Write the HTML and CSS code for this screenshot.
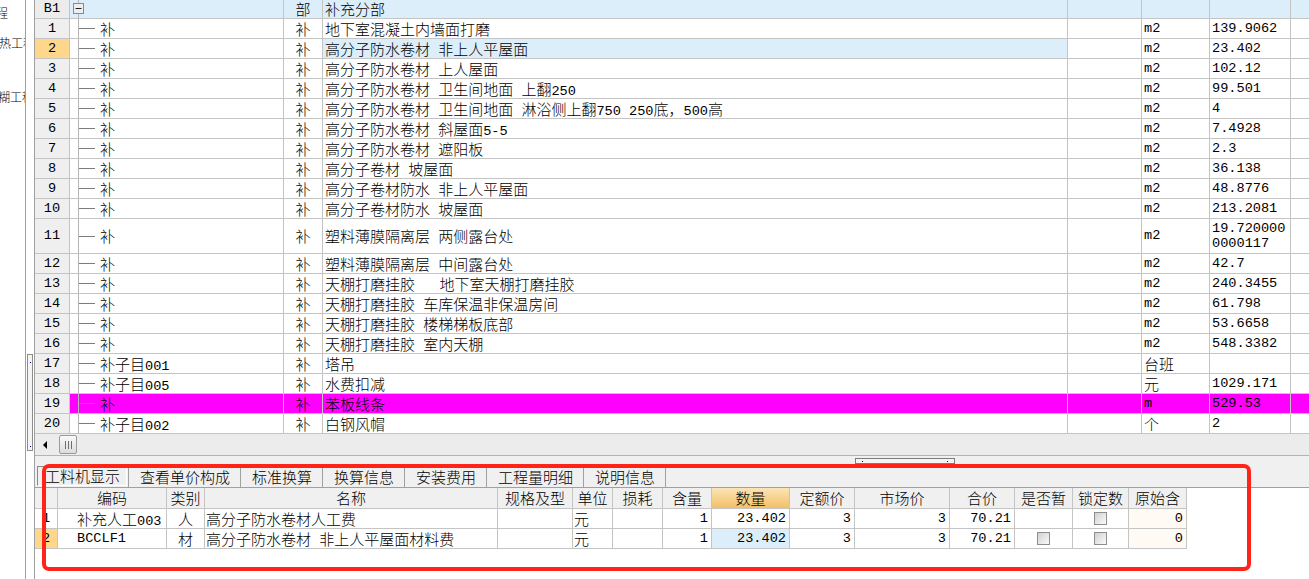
FILE: index.html
```html
<!DOCTYPE html>
<html lang="zh-CN">
<head>
<meta charset="utf-8">
<title>工程量清单</title>
<link rel="stylesheet" href="styles.css">
</head>
<body>
<div class="app">
  <aside class="nav">
    <div class="nav-item i1">工程</div>
    <div class="nav-item i2">保温隔热工程</div>
    <div class="nav-item i3">裱糊工程</div>
  </aside>
  <div class="gutter">
    <div class="vgrip"><svg width="4" height="95" viewBox="0 0 4 95"><rect x="2" y="7" width="1" height="1" fill="#000080"/><rect x="2" y="91" width="1" height="1" fill="#000080"/></svg></div>
  </div>
  <main class="main">
    <div class="grid">
      <div class="row head">
        <div class="c rn">B1</div>
        <div class="c tree"><svg class="minus" width="11" height="11" viewBox="0 0 11 11"><rect x="0.5" y="0.5" width="10" height="10" fill="#eeeeee" stroke="#8a8a8a"/><path d="M2.5 5.5h6" stroke="#202020"/></svg></div>
        <div class="c bu">部</div>
        <div class="c nm">补充分部</div>
        <div class="c"></div><div class="c"></div><div class="c"></div><div class="c last"></div>
      </div>
      <div class="row"><div class="c rn">1</div><div class="c tree">补</div><div class="c bu">补</div><div class="c nm">地下室混凝土内墙面打磨</div><div class="c"></div><div class="c n">m2</div><div class="c n">139.9062</div><div class="c last"></div></div>
      <div class="row cur"><div class="c rn">2</div><div class="c tree">补</div><div class="c bu">补</div><div class="c nm">高分子防水卷材<span class="l"> </span>非上人平屋面</div><div class="c"></div><div class="c n">m2</div><div class="c n">23.402</div><div class="c last"></div></div>
      <div class="row"><div class="c rn">3</div><div class="c tree">补</div><div class="c bu">补</div><div class="c nm">高分子防水卷材<span class="l"> </span>上人屋面</div><div class="c"></div><div class="c n">m2</div><div class="c n">102.12</div><div class="c last"></div></div>
      <div class="row"><div class="c rn">4</div><div class="c tree">补</div><div class="c bu">补</div><div class="c nm">高分子防水卷材<span class="l"> </span>卫生间地面<span class="l"> </span>上翻<span class="l">250</span></div><div class="c"></div><div class="c n">m2</div><div class="c n">99.501</div><div class="c last"></div></div>
      <div class="row"><div class="c rn">5</div><div class="c tree">补</div><div class="c bu">补</div><div class="c nm">高分子防水卷材<span class="l"> </span>卫生间地面<span class="l"> </span>淋浴侧上翻<span class="l">750 250</span>底，<span class="l">500</span>高</div><div class="c"></div><div class="c n">m2</div><div class="c n">4</div><div class="c last"></div></div>
      <div class="row"><div class="c rn">6</div><div class="c tree">补</div><div class="c bu">补</div><div class="c nm">高分子防水卷材<span class="l"> </span>斜屋面<span class="l">5-5</span></div><div class="c"></div><div class="c n">m2</div><div class="c n">7.4928</div><div class="c last"></div></div>
      <div class="row"><div class="c rn">7</div><div class="c tree">补</div><div class="c bu">补</div><div class="c nm">高分子防水卷材<span class="l"> </span>遮阳板</div><div class="c"></div><div class="c n">m2</div><div class="c n">2.3</div><div class="c last"></div></div>
      <div class="row"><div class="c rn">8</div><div class="c tree">补</div><div class="c bu">补</div><div class="c nm">高分子卷材<span class="l"> </span>坡屋面</div><div class="c"></div><div class="c n">m2</div><div class="c n">36.138</div><div class="c last"></div></div>
      <div class="row"><div class="c rn">9</div><div class="c tree">补</div><div class="c bu">补</div><div class="c nm">高分子卷材防水<span class="l"> </span>非上人平屋面</div><div class="c"></div><div class="c n">m2</div><div class="c n">48.8776</div><div class="c last"></div></div>
      <div class="row"><div class="c rn">10</div><div class="c tree">补</div><div class="c bu">补</div><div class="c nm">高分子卷材防水<span class="l"> </span>坡屋面</div><div class="c"></div><div class="c n">m2</div><div class="c n">213.2081</div><div class="c last"></div></div>
      <div class="row tall"><div class="c rn">11</div><div class="c tree">补</div><div class="c bu">补</div><div class="c nm">塑料薄膜隔离层<span class="l"> </span>两侧露台处</div><div class="c"></div><div class="c n">m2</div><div class="c n wrap">19.7200000000117</div><div class="c last"></div></div>
      <div class="row"><div class="c rn">12</div><div class="c tree">补</div><div class="c bu">补</div><div class="c nm">塑料薄膜隔离层<span class="l"> </span>中间露台处</div><div class="c"></div><div class="c n">m2</div><div class="c n">42.7</div><div class="c last"></div></div>
      <div class="row"><div class="c rn">13</div><div class="c tree">补</div><div class="c bu">补</div><div class="c nm">天棚打磨挂胶<span class="l">   </span>地下室天棚打磨挂胶</div><div class="c"></div><div class="c n">m2</div><div class="c n">240.3455</div><div class="c last"></div></div>
      <div class="row"><div class="c rn">14</div><div class="c tree">补</div><div class="c bu">补</div><div class="c nm">天棚打磨挂胶<span class="l"> </span>车库保温非保温房间</div><div class="c"></div><div class="c n">m2</div><div class="c n">61.798</div><div class="c last"></div></div>
      <div class="row"><div class="c rn">15</div><div class="c tree">补</div><div class="c bu">补</div><div class="c nm">天棚打磨挂胶<span class="l"> </span>楼梯梯板底部</div><div class="c"></div><div class="c n">m2</div><div class="c n">53.6658</div><div class="c last"></div></div>
      <div class="row"><div class="c rn">16</div><div class="c tree">补</div><div class="c bu">补</div><div class="c nm">天棚打磨挂胶<span class="l"> </span>室内天棚</div><div class="c"></div><div class="c n">m2</div><div class="c n">548.3382</div><div class="c last"></div></div>
      <div class="row"><div class="c rn">17</div><div class="c tree">补子目<span class="l">001</span></div><div class="c bu">补</div><div class="c nm">塔吊</div><div class="c"></div><div class="c">台班</div><div class="c n"></div><div class="c last"></div></div>
      <div class="row"><div class="c rn">18</div><div class="c tree">补子目<span class="l">005</span></div><div class="c bu">补</div><div class="c nm">水费扣减</div><div class="c"></div><div class="c">元</div><div class="c n">1029.171</div><div class="c last"></div></div>
      <div class="row hl"><div class="c rn">19</div><div class="c tree">补</div><div class="c bu">补</div><div class="c nm">苯板线条</div><div class="c"></div><div class="c n">m</div><div class="c n">529.53</div><div class="c last"></div></div>
      <div class="row"><div class="c rn">20</div><div class="c tree">补子目<span class="l">002</span></div><div class="c bu">补</div><div class="c nm">白钢风帽</div><div class="c"></div><div class="c">个</div><div class="c n">2</div><div class="c last"></div></div>
    </div>
    <div class="hscroll">
      <div class="arrow"></div>
      <div class="thumb"><svg width="9" height="8" viewBox="0 0 9 8"><path d="M1.5 0v8M4.5 0v8M7.5 0v8" stroke="#6e6e6e"/></svg></div>
    </div>
    <div class="lower">
      <div class="splitter"><div class="hgrip"><svg width="98" height="4" viewBox="0 0 98 4"><rect x="6" y="2" width="1" height="1" fill="#000080"/><rect x="91" y="2" width="1" height="1" fill="#000080"/></svg></div></div>
      <div class="tabs">
        <div class="tab first">工料机显示</div>
        <div class="tab">查看单价构成</div>
        <div class="tab">标准换算</div>
        <div class="tab">换算信息</div>
        <div class="tab">安装费用</div>
        <div class="tab">工程量明细</div>
        <div class="tab end">说明信息</div>
      </div>
      <div class="btable">
        <div class="brow bh">
          <div class="bc"></div><div class="bc">编码</div><div class="bc">类别</div><div class="bc">名称</div><div class="bc">规格及型</div><div class="bc">单位</div><div class="bc">损耗</div><div class="bc">含量</div><div class="bc qty">数量</div><div class="bc">定额价</div><div class="bc">市场价</div><div class="bc">合价</div><div class="bc">是否暂</div><div class="bc">锁定数</div><div class="bc">原始含</div>
        </div>
        <div class="brow">
          <div class="bc brn n">1</div><div class="bc code">补充人工<span class="l">003</span></div><div class="bc ctr">人</div><div class="bc name">高分子防水卷材人工费</div><div class="bc"></div><div class="bc name">元</div><div class="bc"></div><div class="bc r n">1</div><div class="bc r n qtyc">23.402</div><div class="bc r n">3</div><div class="bc r n">3</div><div class="bc r n">70.21</div><div class="bc"></div><div class="bc chk"><span class="box"></span></div><div class="bc r n orig">0</div>
        </div>
        <div class="brow bcur">
          <div class="bc brn n">2</div><div class="bc code n">BCCLF1</div><div class="bc ctr">材</div><div class="bc name">高分子防水卷材<span class="l"> </span>非上人平屋面材料费</div><div class="bc"></div><div class="bc name">元</div><div class="bc"></div><div class="bc r n">1</div><div class="bc r n qtyc">23.402</div><div class="bc r n">3</div><div class="bc r n">3</div><div class="bc r n">70.21</div><div class="bc chk"><span class="box"></span></div><div class="bc chk"><span class="box"></span></div><div class="bc r n orig">0</div>
        </div>
      </div>
    </div>
  </main>
</div>
<div class="mark"></div>
</body>
</html>
```
FILE: styles.css
```css
* { box-sizing: border-box; }
html, body { margin: 0; padding: 0; }
body {
  width: 1309px;
  height: 579px;
  overflow: hidden;
  background: #fff;
  color: #000;
  font-family: "Noto Sans CJK SC", "Noto Sans", sans-serif;
  font-size: 15px;
  font-weight: 300;
}
.app { display: flex; height: 579px; }

/* left project tree (clipped) */
.nav {
  width: 26px;
  flex: none;
  border-right: 1px solid #a0a0a0;
  overflow: hidden;
  padding-top: 6px;
  font-size: 12px;
  line-height: 14px;
  white-space: nowrap;
}
.nav-item { height: 14px; }
.i1 { margin-left: -16px; }
.i2 { margin-left: -37px; margin-top: 16px; }
.i3 { margin-left: -14px; margin-top: 40px; }

.gutter { width: 8px; flex: none; padding-top: 354px; }
.vgrip {
  width: 6px;
  height: 97px;
  margin-left: 1px;
  border: 1px solid #8c8c8c;
  background: #f4f4f4;
}
.vgrip svg { display: block; }

.main {
  flex: 1;
  min-width: 0;
  border-left: 1px solid #a0a0a0;
  display: flex;
  flex-direction: column;
}

/* upper grid */
.grid { display: flex; flex-direction: column; }
.row {
  display: grid;
  grid-template-columns: 35px 214px 39px 745px 74px 68px 81px 1fr;
  height: 20px;
  line-height: 19px;
}
.row.head { height: 19px; line-height: 18px; background: #ddeefb; }
.row.tall { height: 35px; line-height: 34px; }
.c {
  border-right: 1px solid #c4c4c4;
  border-bottom: 1px solid #c4c4c4;
  padding-left: 2px;
  white-space: nowrap;
  overflow: hidden;
}
.c.last { border-right: 0; }
.rn {
  background: #efefef;
  text-align: center;
  padding-left: 0;
  font-family: "Liberation Mono", monospace;
  font-size: 13.6px;
}
.head .rn { background: #ececec; }
.n { font-family: "Liberation Mono", monospace; font-size: 13.6px; font-weight: 400; }
.l { font-family: "Liberation Mono", monospace; font-size: 13.6px; font-weight: 400; white-space: pre; }
.bu { text-align: center; padding-left: 0; }
.tree {
  padding-left: 30px;
  background-image: linear-gradient(#b4b4b4, #b4b4b4), linear-gradient(#7c7c7c, #7c7c7c);
  background-repeat: no-repeat;
  background-size: 1px 100%, 16px 1px;
  background-position: 8px 0, 9px 50%;
}
.head .tree {
  padding-left: 3px;
  padding-top: 3px;
  background-image: linear-gradient(#b4b4b4, #b4b4b4);
  background-size: 1px 100%;
  background-position: 8px 0;
}
.minus { display: block; }
.wrap {
  white-space: normal;
  word-break: break-all;
  line-height: 15px;
  padding-top: 2px;
}
.cur .rn { background: #ffd78c; }
.cur .nm { background-color: #ddeefb; }
.hl .c:not(.rn) { background-color: #ff00ff; }

/* horizontal scroll strip */
.hscroll {
  height: 22px;
  flex: none;
  border-bottom: 1px solid #b4b4b4;
  background: #ececec;
  display: flex;
  align-items: center;
  padding-left: 8px;
}
.arrow {
  width: 0;
  height: 0;
  border-right: 4px solid #000;
  border-top: 4px solid transparent;
  border-bottom: 4px solid transparent;
}
.thumb {
  margin-left: 12px;
  width: 18px;
  height: 19px;
  border: 1px solid #9a9a9a;
  border-radius: 2px;
  background: linear-gradient(#fafafa, #dcdcdc);
  display: flex;
  align-items: center;
  justify-content: center;
}
.thumb svg { display: block; }

/* lower panel */
.lower { flex: 1; display: flex; flex-direction: column; background: #fff; }
.splitter { height: 9px; flex: none; background: #f0f0f0; padding-top: 2px; }
.hgrip {
  margin-left: 820px;
  width: 100px;
  height: 6px;
  border: 1px solid #7c7c7c;
  background: #f4f4f4;
}
.hgrip svg { display: block; }
.tabs {
  height: 23px;
  flex: none;
  background: #f0f0f0;
  border-bottom: 1px solid #a0a0a0;
  display: flex;
  padding-left: 2px;
}
.tab {
  margin-top: 1px;
  border-left: 1px solid #a0a0a0;
  padding: 0 10px 0 11px;
  line-height: 21px;
  white-space: nowrap;
}
.tab.first {
  width: 90px;
  border: 1px solid;
  border-color: #8a8a8a #ffffff #ffffff #8a8a8a;
  padding: 0 0 0 7px;
  margin-bottom: 1px;
  margin-right: 1px;
  line-height: 18px;
}
.tab.end { border-right: 1px solid #a0a0a0; }

.btable { display: flex; flex-direction: column; }
.brow {
  display: grid;
  grid-template-columns: 23px 109px 38px 293px 75px 40px 50px 49px 78px 65px 95px 65px 58px 56px 58px;
  height: 20px;
  line-height: 19px;
}
.brow.bh { height: 21px; line-height: 20px; }
.bc {
  border-right: 1px solid #c4c4c4;
  border-bottom: 1px solid #c4c4c4;
  white-space: nowrap;
  overflow: hidden;
}
.bh .bc { background: #f0f0f0; text-align: center; }
.bh .qty { background: linear-gradient(#fbe4b6, #f2c066); }
.brn { text-align: center; }
.r { text-align: right; padding-right: 3px; }
.ctr { text-align: center; }
.code { padding-left: 19px; }
.name { padding-left: 1px; }
.orig { background: #fffaf3; }
.bcur .brn { background: #ffd78c; }
.bcur .qtyc { background: #ddeefb; }
.chk { display: flex; align-items: center; justify-content: center; }
.box {
  width: 13px;
  height: 13px;
  border: 1px solid #8e8e8e;
  background: linear-gradient(135deg, #d0d0d0, #fbfbfb);
}

/* red annotation frame drawn over the lower panel */
.mark {
  position: absolute;
  left: 42px;
  top: 464px;
  width: 1209px;
  height: 107px;
  border: 4px solid #ff2318;
  border-radius: 7px;
  pointer-events: none;
}
```
